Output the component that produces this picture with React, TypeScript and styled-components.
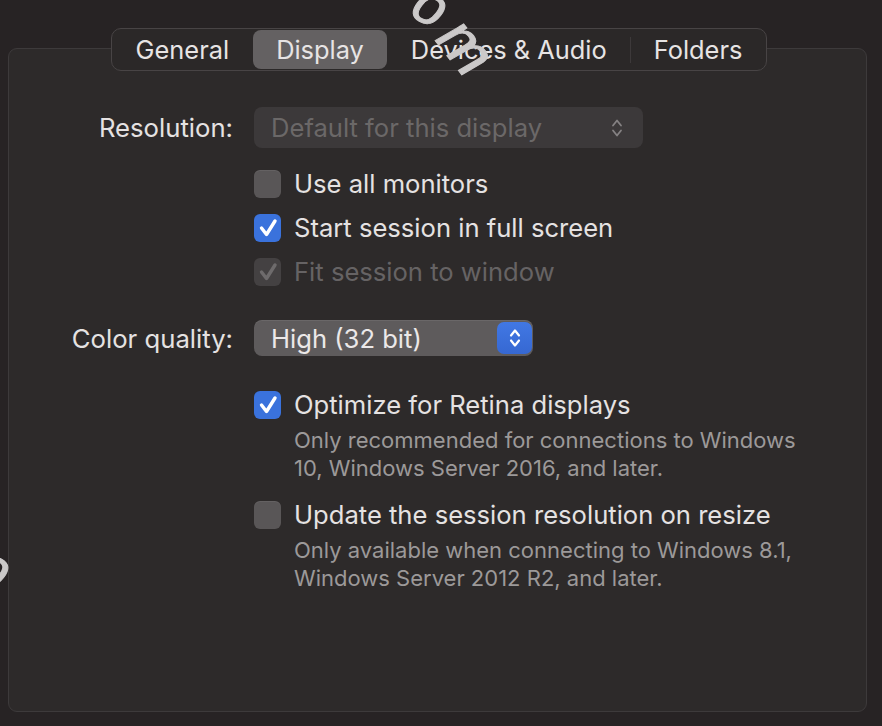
import React from "react";
import styled, { createGlobalStyle, css } from "styled-components";

const GlobalStyle = createGlobalStyle`
  html, body { margin: 0; padding: 0; background: #272324; }
  body {
    font-family: Inter, "Liberation Sans", "Noto Sans", sans-serif;
    -webkit-font-smoothing: antialiased;
  }
  * { box-sizing: border-box; }
`;

const Window = styled.div`
  position: relative;
  width: 882px;
  height: 726px;
  overflow: hidden;
  padding: 28px 15px 0 8px;
  display: flex;
  flex-direction: column;
  background: #272324;
`;

const TabRow = styled.div`
  display: flex;
  justify-content: center;
  padding-left: 3px;
  margin-bottom: -23px;
  position: relative;
  z-index: 1;
`;

const TabBar = styled.div`
  display: flex;
  align-items: stretch;
  height: 43px;
  padding: 1px;
  border: 1px solid #484445;
  border-radius: 10px;
  background: #2b2828;
`;

const Tab = styled.div<{ $active?: boolean }>`
  display: flex;
  align-items: center;
  padding: 0 23px;
  font-size: 25.4px;
  color: #e7e4e4;
  border-radius: 8px;
  ${(p) =>
    p.$active &&
    css`
      background: #646162;
    `}
`;

const Divider = styled.div<{ $hidden?: boolean }>`
  width: 1px;
  align-self: center;
  height: 26px;
  background: ${(p) => (p.$hidden ? "transparent" : "#3d393a")};
`;

const Panel = styled.div`
  height: 664px;
  background: #2d2a2a;
  border: 1px solid #3d3a3b;
  border-radius: 9px;
  padding-top: 58px;
`;

const Field = styled.div<{ $mt?: number }>`
  display: grid;
  grid-template-columns: 224px 1fr;
  column-gap: 21px;
  align-items: center;
  margin-top: ${(p) => p.$mt ?? 0}px;
`;

const Label = styled.div`
  text-align: right;
  font-size: 25.7px;
  color: #e5e2e2;
`;

const Popup = styled.div<{ $disabled?: boolean; $w: number; $h: number }>`
  display: flex;
  align-items: center;
  justify-content: space-between;
  width: ${(p) => p.$w}px;
  height: ${(p) => p.$h}px;
  border-radius: 8px;
  font-size: 25.6px;
  ${(p) =>
    p.$disabled
      ? css`
          background: #3c393a;
          color: #6b6868;
          padding: 0 20px 0 17px;
        `
      : css`
          background: #5e5b5c;
          color: #ebe8e8;
          padding: 2px 1px 2px 17px;
          box-shadow: inset 0 1px 0 rgba(255, 255, 255, 0.08);
        `}
`;

const Stepper = styled.div`
  width: 35px;
  height: 32px;
  border-radius: 7px;
  background: linear-gradient(#4178e4, #3668d2);
  display: flex;
  align-items: center;
  justify-content: center;
`;

const Options = styled.div<{ $mt?: number }>`
  display: flex;
  flex-direction: column;
  margin-top: ${(p) => p.$mt ?? 0}px;
`;

const Option = styled.div<{ $mt?: number }>`
  display: grid;
  grid-template-columns: 27px 1fr;
  column-gap: 13px;
  align-items: center;
  margin-top: ${(p) => p.$mt ?? 0}px;
`;

const Box = styled.div<{ $state: "off" | "on" | "dis" }>`
  width: 27px;
  height: 28px;
  border-radius: 6px;
  display: flex;
  align-items: center;
  justify-content: center;
  background: ${(p) =>
    p.$state === "on" ? "#3a72dc" : p.$state === "dis" ? "#444142" : "#595657"};
  box-shadow: ${(p) =>
    p.$state === "off" ? "inset 0 1px 0 rgba(255,255,255,0.07)" : "none"};
`;

const Title = styled.div<{ $dis?: boolean }>`
  font-size: 25.6px;
  line-height: 44px;
  color: ${(p) => (p.$dis ? "#666364" : "#e5e2e2")};
`;

const Desc = styled.div`
  grid-column: 2;
  font-size: 22px;
  line-height: 27.5px;
  color: #9c9999;
`;

const Mark = styled.span<{ $x: number; $y: number; $r: number; $s?: number }>`
  position: absolute;
  left: ${(p) => p.$x}px;
  top: ${(p) => p.$y}px;
  font-family: "Liberation Sans", sans-serif;
  font-size: ${(p) => p.$s ?? 56}px;
  color: #cbc9c9;
  -webkit-text-stroke: 1px #cbc9c9;
  transform: rotate(${(p) => p.$r}deg) skewX(-8deg);
  line-height: 1;
  pointer-events: none;
  z-index: 2;
`;

const Check = ({ color }: { color: string }) => (
  <svg width="27" height="28" viewBox="0 0 27 28">
    <path
      d="M7.5 14 L12.5 20.5 L21 7"
      fill="none"
      stroke={color}
      strokeWidth="3.4"
      strokeLinecap="round"
      strokeLinejoin="round"
    />
  </svg>
);

const Chevrons = ({ color, w }: { color: string; w: number }) => (
  <svg width="12" height="22" viewBox="0 0 12 22">
    <path
      d="M2 8.5 L6 3.5 L10 8.5 M2 13.5 L6 18.5 L10 13.5"
      fill="none"
      stroke={color}
      strokeWidth={w}
      strokeLinecap="round"
      strokeLinejoin="round"
    />
  </svg>
);

const CheckOption = ({
  state,
  title,
  desc,
  mt,
}: {
  state: "off" | "on" | "dis";
  title: string;
  desc?: string[];
  mt?: number;
}) => (
  <Option $mt={mt}>
    <Box $state={state}>
      {state !== "off" && <Check color={state === "on" ? "#ffffff" : "#6e6b6c"} />}
    </Box>
    <Title $dis={state === "dis"}>{title}</Title>
    {desc && (
      <Desc>
        {desc.map((l) => (
          <div key={l}>{l}</div>
        ))}
      </Desc>
    )}
  </Option>
);

const tabs = ["General", "Display", "Devices & Audio", "Folders"];
const active = 1;

export default function App() {
  return (
    <>
      <GlobalStyle />
      <Window>
        <Mark $x={387} $y={-50} $r={15}>c</Mark>
        <Mark $x={416} $y={-22} $r={30}>o</Mark>
        <Mark $x={441} $y={16} $r={52} $s={62}>m</Mark>
        <Mark $x={-21} $y={540} $r={30}>o</Mark>
        <TabRow>
          <TabBar>
            {tabs.map((t, i) => (
              <React.Fragment key={t}>
                {i > 0 && <Divider $hidden={i === active || i - 1 === active} />}
                <Tab $active={i === active}>{t}</Tab>
              </React.Fragment>
            ))}
          </TabBar>
        </TabRow>
        <Panel>
          <Field>
            <Label>Resolution:</Label>
            <Popup $disabled $w={389} $h={41}>
              <span>Default for this display</span>
              <Chevrons color="#858283" w={1.8} />
            </Popup>
          </Field>
          <Field>
            <div />
            <Options $mt={14}>
              <CheckOption state="off" title="Use all monitors" />
              <CheckOption state="on" title="Start session in full screen" />
              <CheckOption state="dis" title="Fit session to window" />
            </Options>
          </Field>
          <Field $mt={26}>
            <Label>Color quality:</Label>
            <Popup $w={279} $h={36}>
              <span>High (32 bit)</span>
              <Stepper>
                <Chevrons color="#ffffff" w={2.2} />
              </Stepper>
            </Popup>
          </Field>
          <Field>
            <div />
            <Options $mt={27}>
              <CheckOption
                state="on"
                title="Optimize for Retina displays"
                desc={[
                  "Only recommended for connections to Windows",
                  "10, Windows Server 2016, and later.",
                ]}
              />
              <CheckOption
                mt={11}
                state="off"
                title="Update the session resolution on resize"
                desc={[
                  "Only available when connecting to Windows 8.1,",
                  "Windows Server 2012 R2, and later.",
                ]}
              />
            </Options>
          </Field>
        </Panel>
      </Window>
    </>
  );
}
